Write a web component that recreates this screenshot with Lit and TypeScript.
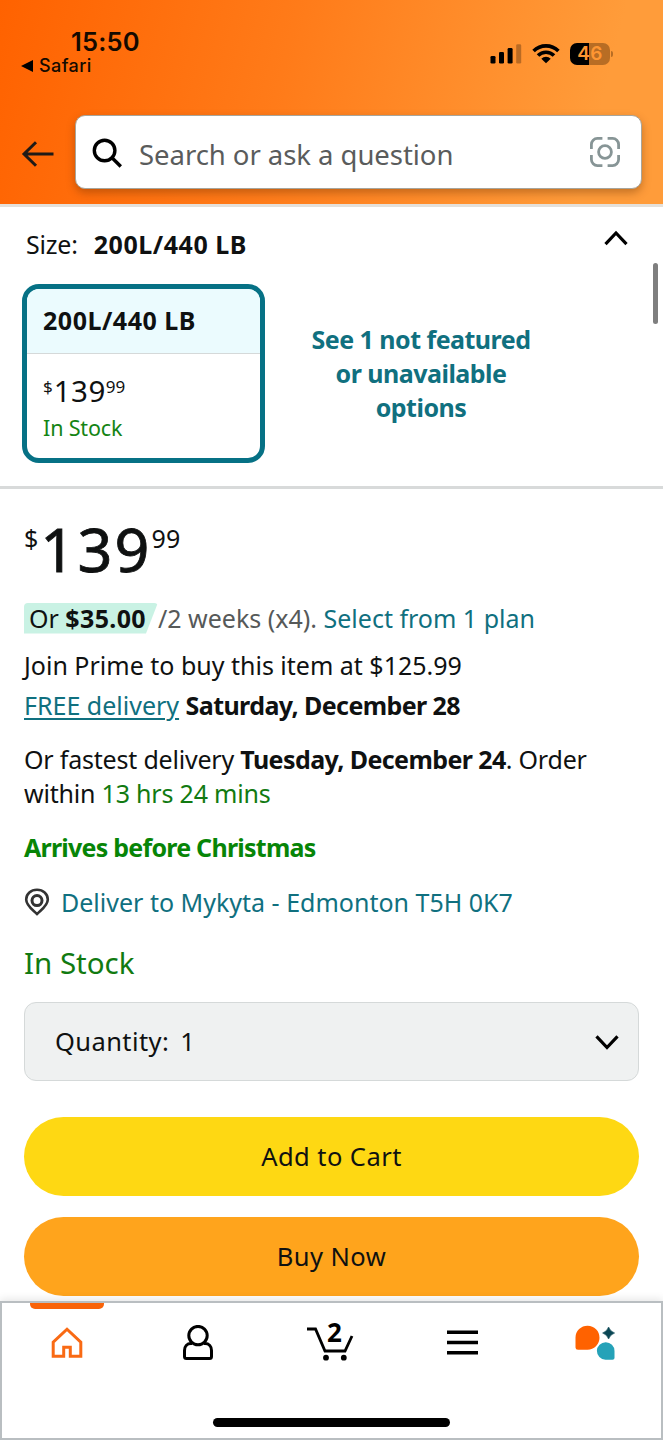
import { LitElement, html, css, svg } from "lit";
import { customElement } from "lit/decorators.js";

const icons: Record<string, unknown> = {
  back: svg`<svg width="34" height="28" viewBox="0 0 34 28" fill="none" stroke="#1f1a17" stroke-width="3"><path d="M3.500 14H33.500M16 2.200L4 14L16 25.800"/></svg>`,
  search: svg`<svg width="32" height="32" viewBox="0 0 32 32" fill="none" stroke="#000" stroke-width="3.4"><circle cx="12.600" cy="12.500" r="10.300"/><path d="M20 19.700L28.800 28.500"/></svg>`,
  lens: svg`<svg width="32" height="32" viewBox="0 0 32 32" fill="none" stroke="#879596" stroke-width="2.8"><path d="M2.4 13V8.4a6 6 0 0 1 6-6H13.4M18.6 2.4H23.6a6 6 0 0 1 6 6V13M29.6 19V23.6a6 6 0 0 1-6 6H18.6M13.4 29.6H8.4a6 6 0 0 1-6-6V19"/><circle cx="16" cy="16" r="6.4"/></svg>`,
  up: svg`<svg width="26" height="18" viewBox="0 0 26 18" fill="none" stroke="#000" stroke-width="3.2"><path d="M2.500 15.200L13 4L23.500 15.200"/></svg>`,
  down: svg`<svg width="26" height="18" viewBox="0 0 26 18" fill="none" stroke="#000" stroke-width="3.2"><path d="M2.500 3.300L13 14.500L23.500 3.300"/></svg>`,
  pin: svg`<svg width="26" height="28" viewBox="0 0 26 28" fill="none" stroke="#333" stroke-width="2.6"><path d="M13 26C9 22 2.2 18 2.2 11.6C2.2 5.800 7 1.800 13 1.800S23.800 5.800 23.800 11.600C23.800 18 17 22 13 26Z"/><circle cx="13" cy="12.600" r="5" stroke-width="3"/></svg>`,
  home: svg`<svg width="32" height="32" viewBox="0 0 32 32" fill="none" stroke="#f96a14" stroke-width="3"><path d="M2.200 29.300V15.200L16 2.200L29.800 15.200V29.300H19.300V20.200H12.700V29.300Z"/></svg>`,
  user: svg`<svg width="32" height="36" viewBox="0 0 32 36" fill="none" stroke="#000" stroke-width="3"><circle cx="16" cy="10.600" r="9.200"/><path d="M10 18.500H9C5 18.500 2.500 21.500 2.500 25.500V31.500Q2.500 33.500 4.500 33.500H27.500Q29.500 33.500 29.500 31.500V25.500C29.500 21.500 27 18.500 23 18.500H22"/></svg>`,
  cart: svg`<svg width="48" height="38" viewBox="0 0 48 38" fill="none" stroke="#000" stroke-width="2.8"><path d="M1 5H9.500L19 27H39L46 12"/><circle cx="20" cy="33.700" r="2.900" fill="#000" stroke="none"/><circle cx="37.800" cy="33.700" r="2.900" fill="#000" stroke="none"/></svg>`,
  menu: svg`<svg width="31" height="26" viewBox="0 0 31 26"><path d="M0 0.500H31V4H0ZM0 10.800H31V14.300H0ZM0 21H31V24.500H0Z"/></svg>`,
  assistant: svg`<svg width="40" height="36" viewBox="0 0 40 36"><path d="M0.500 12.500A12 12 0 1 1 12.500 24.700H3Q0.500 24.700 0.500 22.500Z" fill="#ff6200"/><path d="M39.500 26A8.800 8.800 0 1 0 30.500 34.800H37.500Q39.500 34.800 39.500 33Z" fill="#25a2b8"/><path d="M33.600 2Q35.200 6.400 39.600 8Q35.200 9.600 33.600 14Q32 9.600 27.600 8Q32 6.400 33.600 2Z" fill="#0a4654" stroke="#0a4654" stroke-width=".6"/></svg>`,
  signal: svg`<svg width="32" height="20" viewBox="0 0 32 20"><rect x="0.500" y="12" width="5" height="7.500" rx="1.300"/><rect x="9" y="8" width="5" height="11.500" rx="1.300"/><rect x="17.600" y="4" width="5" height="15.500" rx="1.300"/><rect x="26.200" y="0.200" width="5" height="19.300" rx="1.300" opacity=".27"/></svg>`,
  wifi: svg`<svg width="28" height="20" viewBox="0 0 28 20" fill="none" stroke="#000" stroke-width="3.6"><path d="M1.600 7A17.600 17.600 0 0 1 26.400 7M6 11.600A11.300 11.300 0 0 1 22 11.600"/><path d="M14 19.300L9.300 14.800A6.700 6.700 0 0 1 18.700 14.800Z" fill="#000" stroke="none"/></svg>`,
};

@customElement("status-bar")
class StatusBar extends LitElement {
  static styles = css`
    :host { display: flex; justify-content: space-between; height: 115px; box-sizing: border-box; padding: 28px 50px 0 21px; font-family: Inter, sans-serif; color: #140a00; }
    .time { font-size: 25.5px; line-height: 28px; font-weight: 600; padding-left: 50px; letter-spacing: .2px; }
    .app { display: flex; align-items: center; gap: 6px; font-size: 18px; line-height: 20px; font-weight: 500; letter-spacing: .4px; }
    .right { display: flex; align-items: flex-start; padding-top: 15px; }
    .signal { margin: 1px 10px 0 0; }
    .wifi { margin: 1px 10px 0 0; }
    .battery { display: flex; width: 40px; height: 22px; border-radius: 7px; background: linear-gradient(90deg, #000 48%, #b86d24 48%); color: #ff9632; font-size: 19px; font-weight: 600; line-height: 22px; justify-content: center; letter-spacing: .3px; }
    .tip { width: 2px; height: 6px; margin: 8px 0 0 1px; background: #b86d24; border-radius: 0 2px 2px 0; }
    svg { display: block; }
  `;
  render() {
    return html`
      <div>
        <div class="time">15:50</div>
        <div class="app"><svg width="12" height="12" viewBox="0 0 12 12"><path d="M0 6L12 0V12Z"/></svg>Safari</div>
      </div>
      <div class="right">
        <div class="signal">${icons.signal}</div>
        <div class="wifi">${icons.wifi}</div>
        <div class="battery">46</div><div class="tip"></div>
      </div>`;
  }
}

@customElement("size-picker")
class SizePicker extends LitElement {
  static styles = css`
    :host { display: block; height: 282px; box-sizing: border-box; border-bottom: 3px solid #d8dada; padding: 20px 27px 0 22px; }
    svg { display: block; }
    .head { display: flex; justify-content: space-between; padding: 0 7px 0 4px; line-height: 34px; height: 34px; }
    .name { margin-right: 16px; letter-spacing: -.2px; }
    .head svg { margin-top: 2px; }
    .row { display: flex; margin-top: 23px; }
    .card { width: 243px; height: 179px; box-sizing: border-box; border: 5px solid #067185; border-radius: 17px; overflow: hidden; }
    .label { height: 64px; line-height: 63px; padding-left: 16px; background: #ebfbfe; border-bottom: 1.5px solid #d5d9d9; font-weight: 700; letter-spacing: .52px; }
    .price { display: flex; padding: 17px 0 0 16px; height: 40px; box-sizing: border-box; font-size: 29.5px; line-height: 40px; }
    .whole { letter-spacing: .5px; margin-left: 1px; }
    .small { font-size: 17px; line-height: 32px; }
    .stock { padding: 19px 0 0 16px; font-size: 21.5px; line-height: 30px; color: #148414; letter-spacing: -.15px; }
    .more { width: 240px; margin: 38px 0 0 36px; text-align: center; color: #10707f; font-weight: 700; line-height: 34px; letter-spacing: -.52px; }
    .bold { font-weight: 700; letter-spacing: .55px; }
  `;
  render() {
    return html`
      <div class="head"><div><span class="name">Size:</span><span class="bold">200L/440 LB</span></div>${icons.up}</div>
      <div class="row">
        <div class="card">
          <div class="label">200L/440 LB</div>
          <div class="price"><span class="small">$</span><span class="whole">139</span><span class="small">99</span></div>
          <div class="stock">In Stock</div>
        </div>
        <div class="more">See 1 not featured<br />or unavailable<br />options</div>
      </div>`;
  }
}

@customElement("buy-box")
class BuyBox extends LitElement {
  static styles = css`
    :host { display: flex; flex-direction: column; padding: 0 24px; line-height: 34px; }
    svg { display: block; }
    .price { display: flex; height: 76px; margin-top: 22px; font-size: 61px; line-height: 76px; }
    .whole { letter-spacing: 2.2px; margin-left: 2px; -webkit-text-stroke: .8px #0f1111; }
    .small { font-size: 25px; line-height: 54px; }
    .plan { display: flex; align-items: center; margin-top: 14px; height: 34px; color: #565959; }
    .badge { width: 134px; height: 31px; box-sizing: border-box; padding-left: 5px; line-height: 31px; color: #0f1111; background: #c9f2e4; clip-path: polygon(0 0, 134px 0, 122px 31px, 0 31px); border-radius: 4px 4px 0 0; white-space: nowrap; }
    .amount { font-weight: 700; letter-spacing: .35px; }
    .link { color: #10707f; }
    .free { color: #10707f; text-decoration: underline; text-underline-offset: 3px; text-decoration-thickness: 1.5px; }
    .join { margin-top: 13px; }
    .delivery { margin-top: 6px; }
    .fast { margin-top: 20px; letter-spacing: -.2px; }
    .green { color: #117a11; }
    .xmas { margin-top: 20px; color: #078507; font-weight: 700; letter-spacing: -.76px; }
    .address { display: flex; align-items: center; margin-top: 21px; gap: 11px; }
    .stock { margin-top: 24px; font-size: 29.5px; line-height: 40px; color: #117a11; }
    .qty { display: flex; align-items: center; justify-content: space-between; height: 79px; box-sizing: border-box; margin-top: 19px; padding: 0 18px 0 30px; border: 1.5px solid #d5d9d9; border-radius: 12px; background: #eff1f1; font-size: 25.5px; }
    .qtext { letter-spacing: .4px; padding-bottom: 1px; }
    .num { margin-left: 11px; }
    .btn { height: 79px; line-height: 79px; border-radius: 40px; text-align: center; font-size: 25.5px; letter-spacing: .45px; }
    .cart { margin-top: 36px; background: #fed813; }
    .buy { margin-top: 21px; background: #ffa41c; }
    .date { font-weight: 700; letter-spacing: -.58px; }
  `;
  render() {
    return html`
      <div class="price"><span class="small">$</span><span class="whole">139</span><span class="small">99</span></div>
      <div class="plan"><div class="badge"><span>Or </span><span class="amount">$35.00</span></div><span>/2 weeks (x4).&nbsp;</span><span class="link">Select from 1 plan</span></div>
      <div class="join">Join Prime to buy this item at $125.99</div>
      <div class="delivery"><span class="free">FREE delivery</span> <span class="date">Saturday, December 28</span></div>
      <div class="fast">Or fastest delivery <span class="date">Tuesday, December 24</span>. Order<br />within <span class="green">13 hrs 24 mins</span></div>
      <div class="xmas">Arrives before Christmas</div>
      <div class="address">${icons.pin}<span class="link">Deliver to Mykyta - Edmonton T5H 0K7</span></div>
      <div class="stock">In Stock</div>
      <div class="qty"><div class="qtext">Quantity:<span class="num">1</span></div>${icons.down}</div>
      <div class="btn cart">Add to Cart</div>
      <div class="btn buy">Buy Now</div>`;
  }
}

@customElement("tab-bar")
class TabBar extends LitElement {
  static styles = css`
    :host { display: grid; grid-template-columns: 130px 131px 134px 131px 133px; grid-template-rows: 79px 1fr; position: absolute; left: 0; right: 0; bottom: 0; height: 139px; box-sizing: border-box; border: 2px solid #b9bec1; background: #fff; box-shadow: 0 -2px 8px rgba(0,0,0,.1); }
    .tab { display: flex; justify-content: center; height: 79px; align-items: center; }
    .tab svg { display: block; }
    .active { flex-direction: column; justify-content: flex-start; align-items: center; }
    .mark { width: 74px; height: 6px; border-radius: 0 0 5px 5px; background: #f96308; margin-bottom: 18px; }
    .cart { position: relative; }
    .count { position: absolute; top: 13px; left: 64px; font-size: 26px; line-height: 32px; font-weight: 700; color: #000; }
    .grip { grid-column: 1 / -1; justify-self: center; width: 237px; height: 9px; margin-top: 36px; border-radius: 5px; background: #000; }
  `;
  render() {
    return html`
      <div class="tab active"><div class="mark"></div>${icons.home}</div>
      <div class="tab">${icons.user}</div>
      <div class="tab cart">${icons.cart}<span class="count">2</span></div>
      <div class="tab">${icons.menu}</div>
      <div class="tab">${icons.assistant}</div>
      <div class="grip"></div>`;
  }
}

@customElement("app-root")
class AppRoot extends LitElement {
  static styles = css`
    :host { display: block; position: relative; width: 663px; height: 1440px; overflow: hidden; background: #fff; color: #0f1111; font-family: "Noto Sans", sans-serif; font-size: 25px; }
    svg { display: block; }
    .top { height: 207px; box-sizing: border-box; background: linear-gradient(104deg, #ff6200 0%, #ff7b19 42%, #ff9c3a 88%, #ff9c3a 100%); border-bottom: 3px solid #e4e0da; }
    .bar { display: flex; align-items: center; padding: 0 21px 0 20px; }
    .nudge { padding-top: 4px; }
    .box { display: flex; align-items: center; flex: 1; height: 74px; box-sizing: border-box; margin-left: 21px; padding: 0 20px 0 16px; border: 1.5px solid #a8a59b; border-radius: 10px; background: #fff; box-shadow: 0 4px 8px rgba(90,40,0,.35); }
    .hint { flex: 1; margin-left: 15px; padding-top: 5px; font-size: 27.5px; line-height: 38px; color: #5a5c5c; white-space: nowrap; letter-spacing: -.05px; }
    .scroll { position: absolute; top: 263px; right: 5px; width: 5px; height: 61px; border-radius: 3px; background: #7f7f7f; }
  `;
  render() {
    return html`
      <div class="top">
        <status-bar></status-bar>
        <div class="bar"><div class="nudge">${icons.back}</div>
          <div class="box"><div class="nudge">${icons.search}</div><div class="hint">Search or ask a question</div>${icons.lens}</div>
        </div>
      </div>
      <size-picker></size-picker>
      <buy-box></buy-box>
      <tab-bar></tab-bar>
      <div class="scroll"></div>`;
  }
}
